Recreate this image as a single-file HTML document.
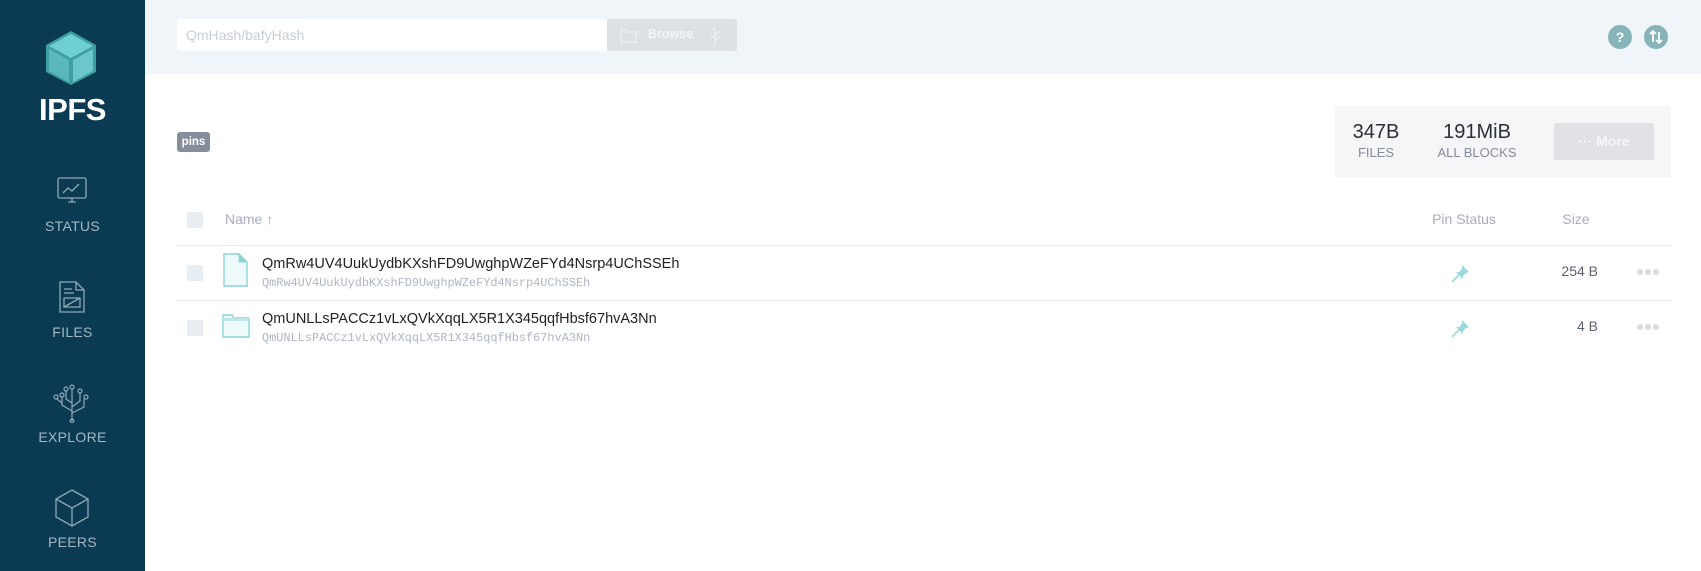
<!DOCTYPE html>
<html><head><meta charset="utf-8"><style>
*{box-sizing:border-box;margin:0;padding:0}
body{width:1701px;height:571px;overflow:hidden;background:#fff;font-family:"Liberation Sans",sans-serif;position:relative}
.side{position:absolute;left:0;top:0;width:145px;height:571px;background:#0b3a53}
.nav{position:absolute;left:0;width:145px;text-align:center;color:#a3b8c3;font-size:14px;letter-spacing:.3px}
.hdr{position:absolute;left:145px;top:0;right:0;height:74px;background:#f0f5fa}
.abs{position:absolute}
.row{position:absolute;left:177px;width:1494px;border-top:1px solid #e4e8ec}
.cb{position:absolute;width:16px;height:16px;background:#e8edf1;border-radius:2px}
.nm{position:absolute;left:262px;font-size:14.5px;color:#222}
.hs{position:absolute;left:262px;font-family:"Liberation Mono",monospace;font-size:11.9px;color:#aeb5c4}
.dot{display:inline-block;width:6px;height:6px;border-radius:50%;background:#d8dbe1;margin-right:2px}
</style></head><body>
<div class="side">
 <svg class="abs" style="left:44px;top:30px" width="54" height="56" viewBox="0 0 54 56">
  <polygon points="27,1 52,15 52,42 27,55 2,42 2,15" fill="#3e9ea0"/>
  <polygon points="27,4 49,16 27,28 5,16" fill="#6fd0d4"/>
  <polygon points="5,19 25,30 25,52 5,41" fill="#58b8bc"/>
  <polygon points="29,30 49,19 49,41 29,52" fill="#6bc7cb"/>
 </svg>
 <div class="abs" style="left:0;width:145px;top:92px;text-align:center;color:#fff;font-size:31px;font-weight:bold;letter-spacing:-0.5px">IPFS</div>
 <svg class="abs" style="left:57px;top:177px" width="30" height="28" viewBox="0 0 30 28" fill="none" stroke="#8fa9b6" stroke-width="1.3"><rect x="1" y="1" width="28" height="20" rx="1.5"/><path d="M11 25h8M15 21v4M6 16l5-5 4 3 7-7"/></svg>
 <div class="nav" style="top:218px">STATUS</div>
 <svg class="abs" style="left:59px;top:281px" width="26" height="32" viewBox="0 0 26 32" fill="none" stroke="#8fa9b6" stroke-width="1.3"><path d="M1 1h16l8 8v22H1z M17 1v8h8"/><path d="M5 8h8M5 12h10M5 17h16v9H5zM5 26l16-9"/></svg>
 <div class="nav" style="top:324px">FILES</div>
 <svg class="abs" style="left:53px;top:383px" width="38" height="40" viewBox="0 0 38 40" fill="none" stroke="#8fa9b6" stroke-width="1.2"><path d="M19 38V6M19 28l-10-6V14M19 24l8-6V10M19 30l12-6v-8M19 20l-6-4V8M9 20L4 16"/><circle cx="19" cy="4" r="2"/><circle cx="9" cy="12" r="2"/><circle cx="27" cy="8" r="2"/><circle cx="13" cy="6" r="2"/><circle cx="33" cy="14" r="2"/><circle cx="3" cy="14" r="2"/><circle cx="19" cy="38" r="1.8"/></svg>
 <div class="nav" style="top:429px">EXPLORE</div>
 <svg class="abs" style="left:54px;top:488px" width="36" height="40" viewBox="0 0 36 40" fill="none" stroke="#8fa9b6" stroke-width="1.3"><path d="M18 2l16 9v18l-16 9-16-9V11zM2 11l16 9 16-9M18 20v18"/></svg>
 <div class="nav" style="top:534px">PEERS</div>
</div>
<div class="hdr"></div>
<div class="abs" style="left:177px;top:19px;width:430px;height:32px;background:#fff;border-radius:3px 0 0 3px;color:#c6ced6;font-size:14px;padding:8px 9px">QmHash/bafyHash</div>
<div class="abs" style="left:607px;top:19px;width:130px;height:32px;background:#dde1e6;border-radius:0 3px 3px 0"></div>
<svg class="abs" style="left:620px;top:28px" width="17" height="15" viewBox="0 0 17 15" fill="none" stroke="#eef0f3" stroke-width="1.2"><path d="M1 2h5l2 2h8v10H1z"/></svg>
<div class="abs" style="left:648px;top:27px;color:#f3f4f6;font-size:12.5px;font-weight:bold">Browse</div>
<svg class="abs" style="left:707px;top:24px" width="16" height="22" viewBox="0 0 16 22" fill="none" stroke="#eef0f3" stroke-width="1"><path d="M8 21V3M8 14L3 10M8 11l5-4M8 16l5-3M8 7L4 4"/></svg>
<svg class="abs" style="left:1608px;top:25px" width="24" height="24" viewBox="0 0 24 24"><circle cx="12" cy="12" r="12" fill="#86b4b8"/><text x="12" y="17" text-anchor="middle" font-family="Liberation Sans" font-weight="bold" font-size="14" fill="#fff">?</text></svg>
<svg class="abs" style="left:1644px;top:25px" width="24" height="24" viewBox="0 0 24 24"><circle cx="12" cy="12" r="12" fill="#86b4b8"/><path d="M9 17V6M6 9l3-3 3 3M15 7v11M12 15l3 3 3-3" stroke="#fff" stroke-width="1.8" fill="none"/></svg>
<div class="abs" style="left:177px;top:132px;width:33px;height:20px;background:#868e9c;border-radius:3px;color:#fff;font-size:11.5px;font-weight:bold;text-align:center;line-height:20px">pins</div>
<div class="abs" style="left:1335px;top:106px;width:336px;height:71px;background:#f5f6f8"></div>
<div class="abs" style="left:1340px;top:121px;width:72px;text-align:center;font-size:20px;color:#2b2f36">347B</div>
<div class="abs" style="left:1340px;top:145px;width:72px;text-align:center;font-size:13px;color:#858b99">FILES</div>
<div class="abs" style="left:1427px;top:121px;width:100px;text-align:center;font-size:20px;color:#2b2f36">191MiB</div>
<div class="abs" style="left:1427px;top:145px;width:100px;text-align:center;font-size:13px;color:#858b99">ALL BLOCKS</div>
<div class="abs" style="left:1554px;top:123px;width:100px;height:37px;background:#e0e2e6;border-radius:2px;color:#f5f6f8;font-size:14px;line-height:37px;text-align:center;font-weight:bold">··· More</div>
<div class="cb" style="left:187px;top:212px"></div>
<div class="abs" style="left:225px;top:211px;color:#a8adbf;font-size:14px">Name ↑</div>
<div class="abs" style="left:1424px;top:211px;width:80px;text-align:center;color:#a8adbf;font-size:14px">Pin Status</div>
<div class="abs" style="left:1546px;top:211px;width:60px;text-align:center;color:#a8adbf;font-size:14px">Size</div>
<div class="row" style="top:245px"></div>
<div class="row" style="top:300px"></div>
<div class="cb" style="left:187px;top:265px"></div>
<svg class="abs" style="left:223px;top:253px" width="25" height="34" viewBox="0 0 25 34"><path d="M1 1h15l8 8v24H1z" fill="#effafb" stroke="#8cd4d8" stroke-width="1.4"/><path d="M16 1v8h8" fill="#8cd4d8" stroke="#8cd4d8" stroke-width="1"/></svg>
<div class="nm" style="top:256px">QmRw4UV4UukUydbKXshFD9UwghpWZeFYd4Nsrp4UChSSEh</div>
<div class="hs" style="top:276px">QmRw4UV4UukUydbKXshFD9UwghpWZeFYd4Nsrp4UChSSEh</div>
<svg class="abs" style="left:1451px;top:263px" width="20" height="20" viewBox="0 0 20 20"><path d="M11 2l7 7-3 1-3 3 0 3-7-7 3 0 3-3z" fill="#9ad9dd"/><path d="M8 12L1 19" stroke="#9ad9dd" stroke-width="1.6"/></svg>
<div class="abs" style="left:1540px;top:263px;width:58px;text-align:right;color:#5d6270;font-size:14px">254 B</div>
<div class="abs" style="left:1637px;top:262px"><span class="dot"></span><span class="dot"></span><span class="dot"></span></div>
<div class="cb" style="left:187px;top:320px"></div>
<svg class="abs" style="left:222px;top:312px" width="28" height="26" viewBox="0 0 28 26"><path d="M1 3h9l2 3h15v19H1z" fill="#effafb" stroke="#8cd4d8" stroke-width="1.4"/><path d="M1 6h26v3H1z" fill="#bce6e8"/></svg>
<div class="nm" style="top:311px">QmUNLLsPACCz1vLxQVkXqqLX5R1X345qqfHbsf67hvA3Nn</div>
<div class="hs" style="top:331px">QmUNLLsPACCz1vLxQVkXqqLX5R1X345qqfHbsf67hvA3Nn</div>
<svg class="abs" style="left:1451px;top:318px" width="20" height="20" viewBox="0 0 20 20"><path d="M11 2l7 7-3 1-3 3 0 3-7-7 3 0 3-3z" fill="#9ad9dd"/><path d="M8 12L1 19" stroke="#9ad9dd" stroke-width="1.6"/></svg>
<div class="abs" style="left:1540px;top:318px;width:58px;text-align:right;color:#5d6270;font-size:14px">4 B</div>
<div class="abs" style="left:1637px;top:317px"><span class="dot"></span><span class="dot"></span><span class="dot"></span></div>
</body></html>
